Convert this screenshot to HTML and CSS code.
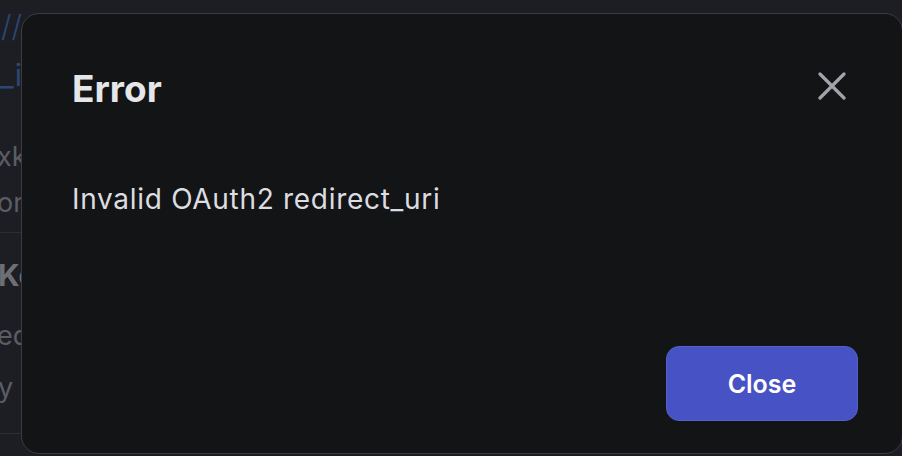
FILE: index.html
```html
<!DOCTYPE html>
<html>
<head>
<meta charset="utf-8">
<link rel="stylesheet" href="styles.css">
</head>
<body>
<div class="page">
  <div class="bg">
    <div class="frag link slashes"><span>//</span></div>
    <div class="frag link under"><span>_id</span></div>
    <div class="frag muted xk"><span>xkc</span></div>
    <div class="frag muted or"><span>ore</span></div>
    <div class="rule r1"></div>
    <div class="frag strong ko"><span>Ke</span></div>
    <div class="frag muted ed"><span>ed</span></div>
    <div class="frag muted ya"><span>y a</span></div>
    <div class="rule r2"></div>
  </div>

  <div class="modal">
    <div class="modal-head">
      <h1 class="title">Error</h1>
      <button class="close-x" aria-label="Close">
        <svg viewBox="0 0 28 28" width="28" height="28">
          <path d="M2 2 L26 26 M26 2 L2 26" stroke="#a3a4ab" stroke-width="3.2" stroke-linecap="round" fill="none"/>
        </svg>
      </button>
    </div>
    <p class="message">Invalid OAuth2 redirect_uri</p>
    <div class="modal-foot">
      <button class="btn-close">Close</button>
    </div>
  </div>
</div>
</body>
</html>
```
FILE: styles.css
```css
* { box-sizing: border-box; }
html, body { margin: 0; padding: 0; }
body {
  width: 902px;
  height: 456px;
  overflow: hidden;
  background: #1d1e23;
  font-family: Inter, "Noto Sans", sans-serif;
}
.page {
  position: relative;
  width: 902px;
  height: 456px;
  overflow: hidden;
}
.bg {
  display: flex;
  flex-direction: column;
  width: 60px;
}
.frag {
  white-space: nowrap;
}
.link { color: #2a4872; font-size: 30px; }
.muted { color: #5c5d64; font-size: 27px; }
.strong { color: #6e6f76; font-size: 30px; font-weight: 700; }
.slashes { margin-top: 6px; line-height: 40px; font-weight: 300; margin-left: 1px; }
.under { margin-top: 12px; line-height: 34px; margin-left: 0; }
.xk { margin-top: 50px; line-height: 30px; margin-left: -3px; }
.or { margin-top: 16px; line-height: 30px; margin-left: -3px; }
.rule { height: 1px; background: #2c2d33; width: 60px; }
.r1 { margin-top: 14px; }
.ko { margin-top: 24px; line-height: 36px; margin-left: -2px; }
.ed { margin-top: 28px; line-height: 30px; margin-left: -3px; }
.ya { margin-top: 22px; line-height: 30px; margin-left: -2px; }
.r2 { margin-top: 30px; }

.modal {
  position: absolute;
  left: 21px;
  top: 13px;
  width: 882px;
  height: 441px;
  background: #131416;
  border: 1px solid #3b3c42;
  border-radius: 18px;
  padding: 53px 44px 32px 50px;
  display: flex;
  flex-direction: column;
}
.modal-head {
  display: flex;
  justify-content: space-between;
  align-items: flex-start;
}
.title {
  margin: 0;
  font-size: 37px;
  line-height: 44px;
  font-weight: 700;
  color: #e6e6e9;
}
.close-x {
  margin: 5px 12px 0 0;
  padding: 0;
  width: 28px;
  height: 28px;
  border: 0;
  background: none;
  display: flex;
}
.message {
  margin: 70px 0 0 0;
  font-size: 28px;
  line-height: 36px;
  letter-spacing: 0.7px;
  color: #dcdde0;
}
.modal-foot {
  margin-top: auto;
  display: flex;
  justify-content: flex-end;
}
.btn-close {
  width: 192px;
  height: 75px;
  border-radius: 13px;
  background: #4752c4;
  border: 1px solid #5660cc;
  color: #ffffff;
  font-family: Inter, "Noto Sans", sans-serif;
  font-size: 25px;
  font-weight: 600;
}
```
